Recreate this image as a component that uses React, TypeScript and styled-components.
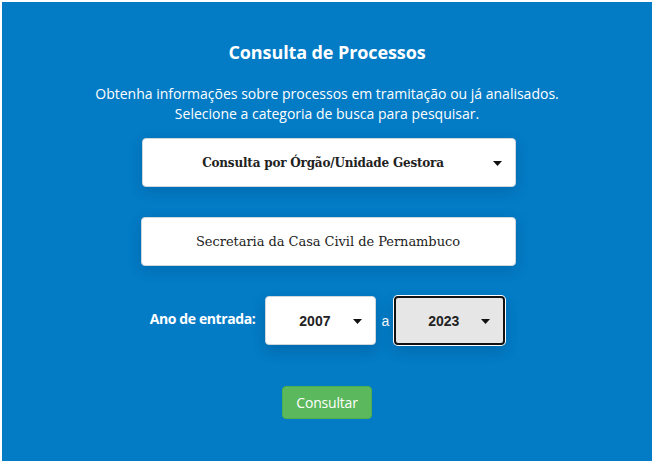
import React from "react";
import styled, { createGlobalStyle } from "styled-components";

const Global = createGlobalStyle`
  html, body { margin: 0; padding: 0; background: #ffffff; }
  body { font-family: "Open Sans", sans-serif; }
  * { box-sizing: border-box; }
`;

const Page = styled.div`
  width: 655px;
  height: 461px;
  padding: 2px 3px 0 2px;
  background: #ffffff;
  overflow: hidden;
`;

const Panel = styled.section`
  height: 100%;
  background: #037bc5;
  display: flex;
  flex-direction: column;
  align-items: center;
  padding-top: 38px;
  color: #ffffff;
`;

const Title = styled.h1`
  margin: 0;
  font-family: "Open Sans", sans-serif;
  font-weight: 700;
  font-size: 18px;
  line-height: 24px;
  letter-spacing: -0.1px;
`;

const Lead = styled.p`
  margin: 20px 0 0;
  font-family: "Open Sans", sans-serif;
  font-size: 14px;
  line-height: 20px;
  text-align: center;
  letter-spacing: 0;
`;

const Form = styled.div`
  margin-top: 14px;
  display: flex;
  flex-direction: column;
  align-items: center;
`;

const Field = styled.div<{ $w: number; $mt: number; $dx?: number }>`
  width: ${(p) => p.$w}px;
  height: 49px;
  margin-top: ${(p) => p.$mt}px;
  margin-left: ${(p) => (p.$dx ?? 0) * 2}px;
  background: #ffffff;
  border: 1px solid #cfd6dc;
  border-radius: 4px;
  box-shadow: 0 4px 14px rgba(0, 40, 80, 0.18);
  display: flex;
  align-items: center;
  justify-content: center;
  position: relative;
  color: #222222;
`;

const SelectText = styled.span`
  font-family: "DejaVu Serif", serif;
  font-weight: 700;
  font-size: 12px;
  margin-right: 12px;
  letter-spacing: -0.2px;
`;

const PlainText = styled.span`
  font-family: "DejaVu Serif", serif;
  font-size: 13px;
  letter-spacing: -0.05px;
`;

const Caret = styled.svg`
  position: absolute;
  right: 13px;
  top: 50%;
  width: 9px;
  height: 5px;
  margin-top: -2px;
`;

const YearRow = styled.div`
  margin-top: 30px;
  margin-left: 1px;
  display: flex;
  align-items: center;
`;

const Label = styled.span`
  font-family: "Open Sans", sans-serif;
  font-weight: 700;
  font-size: 14px;
  letter-spacing: -0.4px;
  margin-right: 10px;
  margin-bottom: 4px;
`;

const Sep = styled.span`
  font-family: "Liberation Sans", Arial, sans-serif;
  font-size: 14px;
  margin: 0 5px;
`;

const YearSelect = styled.div<{ $focus?: boolean }>`
  width: 111px;
  height: 49px;
  border-radius: 4px;
  background: ${(p) => (p.$focus ? "#e6e6e6" : "#ffffff")};
  border: ${(p) => (p.$focus ? "2px solid #111111" : "1px solid #cfd6dc")};
  box-shadow: ${(p) =>
    p.$focus ? "0 0 0 1px #ffffff, 0 6px 14px rgba(0,40,80,0.2)" : "0 6px 14px rgba(0,40,80,0.2)"};
  display: flex;
  align-items: center;
  justify-content: center;
  position: relative;
  color: #222222;
`;

const YearText = styled.span`
  font-family: "Liberation Sans", Arial, sans-serif;
  font-weight: 700;
  font-size: 14px;
  margin-right: 12px;
`;

const Button = styled.button`
  margin-top: 41px;
  width: 90px;
  height: 33px;
  background: #5cb85c;
  border: 1px solid #4cae4c;
  border-radius: 4px;
  color: #ffffff;
  font-family: "Open Sans", sans-serif;
  font-size: 14px;
  letter-spacing: -0.2px;
  padding: 0;
  cursor: pointer;
`;

const Arrow = () => (
  <Caret viewBox="0 0 9 5">
    <path d="M0 0 H9 L4.5 5 Z" fill="#111" />
  </Caret>
);

export default function App() {
  return (
    <>
      <Global />
      <Page>
        <Panel>
          <Title>Consulta de Processos</Title>
          <Lead>
            Obtenha informações sobre processos em tramitação ou já analisados.
            <br />
            Selecione a categoria de busca para pesquisar.
          </Lead>
          <Form>
            <Field $w={374} $mt={0} $dx={2}>
              <SelectText>Consulta por Órgão/Unidade Gestora</SelectText>
              <Arrow />
            </Field>
            <Field $w={375} $mt={30} $dx={1}>
              <PlainText>Secretaria da Casa Civil de Pernambuco</PlainText>
            </Field>
            <YearRow>
              <Label>Ano de entrada:</Label>
              <YearSelect>
                <YearText>2007</YearText>
                <Arrow />
              </YearSelect>
              <Sep>a</Sep>
              <YearSelect $focus>
                <YearText>2023</YearText>
                <Arrow />
              </YearSelect>
            </YearRow>
            <Button>Consultar</Button>
          </Form>
        </Panel>
      </Page>
    </>
  );
}
